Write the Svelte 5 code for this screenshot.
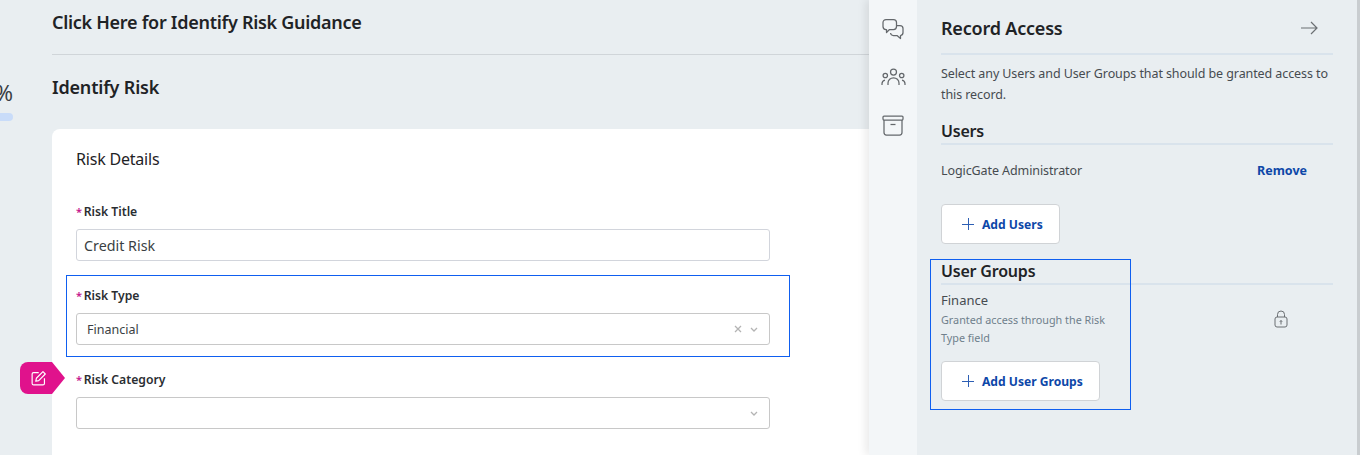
<script lang="ts">
  const iconRail = ["chat", "people", "archive"];
</script>

<div class="page">
  <aside class="progress">
    <span class="percent">40%</span>
    <div class="bar"></div>
  </aside>

  <main class="content">
    <h2 class="guidance">Click Here for Identify Risk Guidance</h2>
    <h2 class="step-title">Identify Risk</h2>

    <section class="card">
      <h3>Risk Details</h3>

      <div class="field first">
        <label for="risk-title"><span class="req">*</span> Risk Title</label>
        <input id="risk-title" type="text" value="Credit Risk" />
      </div>

      <div class="field highlighted">
        <span class="label"><span class="req">*</span> Risk Type</span>
        <div class="select">
          <span class="value">Financial</span>
          <svg class="clear" viewBox="0 0 8 8" width="8" height="8"><path d="M1 1l6 6M7 1L1 7" /></svg>
          <svg class="chev" viewBox="0 0 8 5" width="8" height="5"><path d="M1 1l3 3 3-3" /></svg>
        </div>
      </div>

      <div class="field category">
        <div class="edit-tag">
          <svg viewBox="0 0 16 16" width="17" height="17">
            <path d="M8.200 2.400H3.400a1.400 1.400 0 0 0-1.400 1.400v8.800A1.400 1.400 0 0 0 3.400 14h8.800a1.400 1.400 0 0 0 1.400-1.400V7.800" />
            <path d="M12.200 1.600l2.200 2.200-6.200 6.200-2.800.6.600-2.800z" />
          </svg>
        </div>
        <span class="label"><span class="req">*</span> Risk Category</span>
        <div class="select">
          <span class="value"></span>
          <svg class="chev" viewBox="0 0 8 5" width="8" height="5"><path d="M1 1l3 3 3-3" /></svg>
        </div>
      </div>
    </section>
  </main>

  <div class="drawer">
    <nav class="rail">
      {#each iconRail as icon}
        <button class="rail-btn {icon}" aria-label={icon}>
          {#if icon === "chat"}
            <svg viewBox="0 0 22 22" width="22" height="22">
              <path d="M4 1.500h7.500a3 3 0 0 1 3 3v4a3 3 0 0 1-3 3H7.500L4.500 14.500v-3H4a3 3 0 0 1-3-3v-4a3 3 0 0 1 3-3z" />
              <path d="M15 7.500h3a3 3 0 0 1 3 3v4a3 3 0 0 1-2.500 3v3l-3.500-3h-3.500a3 3 0 0 1-3-2.500" />
            </svg>
          {:else if icon === "people"}
            <svg viewBox="0 0 25 18" width="25" height="18">
              <circle cx="12.500" cy="4" r="3" />
              <path d="M7 17v-2a5.500 5.200 0 0 1 11 0v2" />
              <circle cx="4.300" cy="7.500" r="2.200" />
              <path d="M1 17v-1.200a3.800 3.800 0 0 1 3-3.700" />
              <circle cx="20.700" cy="7.500" r="2.200" />
              <path d="M24 17v-1.200a3.800 3.800 0 0 0-3-3.700" />
            </svg>
          {:else}
            <svg viewBox="0 0 22 21" width="22" height="21">
              <rect x="1" y="1" width="20" height="4" rx="1" />
              <path d="M2 5v12.500A2.500 2.500 0 0 0 4.500 20h13a2.500 2.500 0 0 0 2.500-2.500V5" />
              <path d="M8.500 9.500h5" />
            </svg>
          {/if}
        </button>
      {/each}
    </nav>

    <div class="panel">
      <header class="panel-head">
        <h2>Record Access</h2>
        <svg viewBox="0 0 18 14" width="18" height="14"><path d="M1 7h16M11 1l6 6-6 6" /></svg>
      </header>
      <p class="intro">Select any Users and User Groups that should be granted access to this record.</p>

      <h3 class="section-title">Users</h3>
      <div class="row user">
        <span>LogicGate Administrator</span>
        <button class="link">Remove</button>
      </div>
      <button class="add add-users"><span class="plus"></span>Add Users</button>

      <div class="groups">
        <div class="group-outline"></div>
        <h3 class="section-title">User Groups</h3>
        <div class="row group">
          <div class="group-info">
            <div class="group-name">Finance</div>
            <div class="group-note">Granted access through the Risk<br />Type field</div>
          </div>
          <svg class="lock" viewBox="0 0 14 18" width="14" height="18">
            <path d="M3.500 7V4.500a3.500 3.500 0 0 1 7 0V7" />
            <rect x="1" y="7" width="12" height="10" rx="2" />
            <path d="M7 14.500v-4M5.800 11.800L7 10.500l1.200 1.300" />
          </svg>
        </div>
        <button class="add"><span class="plus"></span>Add User Groups</button>
      </div>
    </div>
    <div class="scroll-edge"></div>
  </div>
</div>

<style>
  :global(body) {
    margin: 0;
    font-family: "Noto Sans", "Open Sans", sans-serif;
    background: #e9eef1;
    color: #1f2326;
  }

  .page {
    display: flex;
    height: 455px;
    overflow: hidden;
    background: #e9eef1;
  }

  .progress {
    flex: 0 0 13px;
    margin-right: 39px;
    padding-top: 79px;
    display: flex;
    flex-direction: column;
    align-items: flex-end;
    overflow: hidden;
    box-sizing: border-box;
  }

  .percent {
    font-size: 22px;
    line-height: 26px;
    white-space: nowrap;
    color: #3a3f44;
  }

  .bar {
    flex: none;
    width: 60px;
    height: 8px;
    margin-top: 8px;
    border-radius: 0 4px 4px 0;
    background: #c9dcf9;
  }

  .content {
    flex: 1;
    min-width: 0;
  }

  h2, h3, p {
    margin: 0;
  }

  .guidance {
    font-size: 18px;
    font-weight: 600;
    line-height: 24px;
    padding: 10px 0 20px;
    border-bottom: 1px solid #d0d5d9;
    letter-spacing: -0.28px;
  }

  .step-title {
    font-size: 18px;
    font-weight: 600;
    line-height: 24px;
    padding: 20px 0 30px;
    letter-spacing: -0.2px;
  }

  .card {
    background: #fff;
    border-radius: 8px 0 0 0;
    padding: 18px 100px 30px 24px;
    height: 400px;
  }

  .card h3 {
    font-size: 16px;
    font-weight: 400;
    line-height: 24px;
    letter-spacing: -0.2px;
  }

  .field {
    position: relative;
    width: 694px;
  }

  .field.first {
    margin-top: 32px;
  }

  .field label, .label {
    display: block;
    font-size: 12.200px;
    font-weight: 600;
    line-height: 18px;
    margin-bottom: 8px;
    color: #2a2e32;
  }

  .req {
    color: #c4168c;
    font-size: 11px;
    margin-right: -1.500px;
  }

  input {
    display: block;
    width: 100%;
    height: 32px;
    box-sizing: border-box;
    border: 1px solid #d2d5dc;
    border-radius: 3px;
    padding: 0 7px;
    font: inherit;
    font-size: 14.300px;
    color: #3a3f44;
    background: #fff;
  }

  .highlighted {
    outline: 1px solid #0f5ff0;
    outline-offset: -1px;
    margin: 14px -20px 0 -10px;
    padding: 12px 20px 12px 10px;
  }

  .category {
    margin-top: 14px;
  }

  .select {
    display: flex;
    align-items: center;
    gap: 8px;
    height: 32px;
    box-sizing: border-box;
    border: 1px solid #c8c8c8;
    border-radius: 3px;
    padding: 0 11px 0 10px;
    background: #fff;
  }

  .value {
    flex: 1;
    font-size: 12.500px;
    color: #3a3f44;
  }

  .select svg path {
    fill: none;
    stroke: #b4b4b4;
    stroke-width: 1.300;
  }

  .edit-tag {
    position: absolute;
    left: -56px;
    top: -9px;
    width: 32px;
    height: 32px;
    background: #e0128c;
    border-radius: 8px 0 0 8px;
    display: flex;
    align-items: center;
    justify-content: center;
  }

  .edit-tag::after {
    content: "";
    position: absolute;
    left: 100%;
    top: 0;
    border-left: 13px solid #e0128c;
    border-top: 16px solid transparent;
    border-bottom: 16px solid transparent;
  }

  .edit-tag svg {
    margin-left: 4px;
  }

  .edit-tag path {
    fill: none;
    stroke: #fff;
    stroke-width: 1.100;
    stroke-linejoin: round;
  }

  .drawer {
    flex: 0 0 491px;
    display: flex;
    position: relative;
    box-shadow: -4px 0 8px rgba(0, 0, 0, 0.08);
  }

  .rail {
    flex: 0 0 48px;
    background: #f3f6f8;
    display: flex;
    flex-direction: column;
    align-items: center;
    padding-top: 18px;
  }

  .rail-btn {
    border: none;
    background: none;
    padding: 0;
    display: flex;
    height: 22px;
    align-items: center;
    margin-bottom: 26px;
  }

  .rail svg * {
    fill: none;
    stroke: #64686c;
    stroke-width: 1.250;
    stroke-linejoin: round;
  }

  .panel {
    flex: 1;
    background: #e9eef1;
    padding: 0 24px;
    min-width: 0;
  }

  .scroll-edge {
    flex: 0 0 3px;
    background: #c9cdd0;
  }

  .panel-head {
    display: flex;
    align-items: center;
    justify-content: space-between;
    height: 55px;
    padding: 3px 15px 0 0;
    border-bottom: 2px solid #d9e3ec;
    box-sizing: border-box;
  }

  .panel-head h2 {
    font-size: 18px;
    font-weight: 600;
    letter-spacing: -0.2px;
  }

  .panel-head path {
    fill: none;
    stroke: #6b6f73;
    stroke-width: 1.200;
  }

  .intro {
    font-size: 12.500px;
    line-height: 21px;
    letter-spacing: -0.09px;
    color: #464b50;
    margin-top: 8px;
    margin-bottom: 14px;
  }

  .section-title {
    font-size: 16px;
    font-weight: 600;
    line-height: 24px;
    border-bottom: 2px solid #d9e3ec;
    letter-spacing: -0.2px;
  }

  .row {
    display: flex;
    align-items: center;
    justify-content: space-between;
    font-size: 12.500px;
    color: #464b50;
  }

  .row.user {
    height: 40px;
    margin-top: 5px;
    padding-right: 26px;
    letter-spacing: -0.09px;
  }

  .link {
    border: none;
    background: none;
    padding: 0;
    font: inherit;
    font-size: 12.500px;
    font-weight: 700;
    color: #0d47a8;
    letter-spacing: 0;
  }

  .add {
    display: flex;
    align-items: center;
    height: 40px;
    padding: 0 16px 0 20px;
    border: 1px solid #d0d3d6;
    border-radius: 4px;
    background: #fff;
    font: inherit;
    font-size: 12.100px;
    font-weight: 700;
    color: #0d47a8;
    box-sizing: border-box;
  }

  .add-users {
    margin-top: 14px;
  }

  .plus {
    width: 12px;
    height: 12px;
    margin-right: 8px;
    background:
      linear-gradient(#2d5fb4, #2d5fb4) center / 100% 1px no-repeat,
      linear-gradient(#2d5fb4, #2d5fb4) center / 1px 100% no-repeat;
  }

  .groups {
    position: relative;
    margin-top: 15px;
  }

  .group-outline {
    position: absolute;
    left: -11px;
    top: 0;
    width: 199px;
    height: 149px;
    border: 1px solid #0f5ff0;
    pointer-events: none;
  }

  .row.group {
    padding: 5px 45px 0 0;
    margin-bottom: 14px;
  }

  .group-name {
    font-size: 13px;
    line-height: 21px;
  }

  .group-note {
    font-size: 10.800px;
    line-height: 18px;
    color: #6f7f8c;
  }

  .lock * {
    fill: none;
    stroke: #6b6f73;
    stroke-width: 1;
  }
</style>
